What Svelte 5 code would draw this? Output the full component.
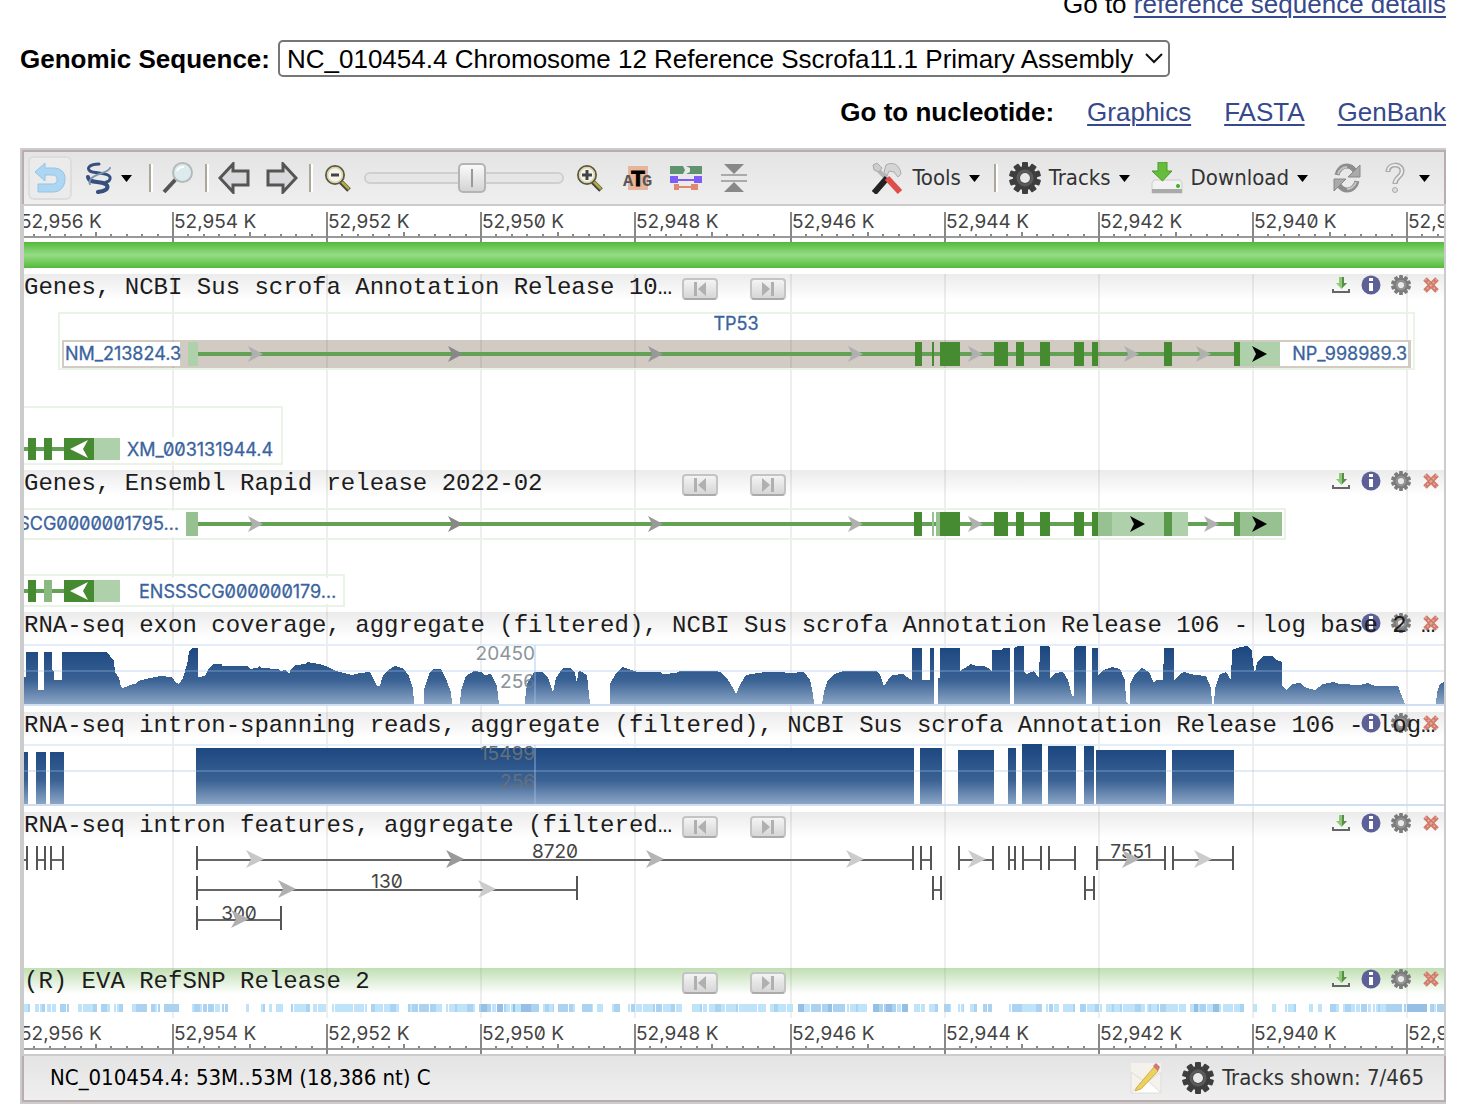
<script>
  const gridX = [173, 327, 481, 635, 791, 945, 1099, 1253, 1407];
  const ruler = [
    { x: 19, label: '52,956 K' },
    { x: 173, label: '52,954 K' },
    { x: 327, label: '52,952 K' },
    { x: 481, label: '52,950 K' },
    { x: 635, label: '52,948 K' },
    { x: 791, label: '52,946 K' },
    { x: 945, label: '52,944 K' },
    { x: 1099, label: '52,942 K' },
    { x: 1253, label: '52,940 K' },
    { x: 1407, label: '52,938 K' }
  ];
  const minor = [1, 2, 3, 4, 5, 6, 7, 8, 9];

  const DARK = '#468a32';
  const MID = '#97c191';
  const LIGHT = '#aed0ab';
  const sharedExons = [
    [994, 1008], [1016, 1024], [1040, 1050], [1074, 1084], [1092, 1098]
  ].map(([a, b]) => [a, b, DARK]);
  const tp53 = [
    [188, 198, LIGHT], [915, 922, DARK], [932, 934, DARK], [940, 960, DARK],
    ...sharedExons,
    [1164, 1172, DARK], [1234, 1240, DARK], [1240, 1280, LIGHT]
  ];
  const ensembl = [
    [186, 198, MID], [914, 922, DARK], [932, 934, MID], [936, 940, MID], [940, 960, DARK],
    ...sharedExons,
    [1098, 1112, MID], [1112, 1164, LIGHT], [1164, 1172, '#58994a'], [1172, 1188, LIGHT],
    [1234, 1240, '#58994a'], [1240, 1282, MID]
  ];
  const geneArrows = [
    [248, '#b0b0b0'], [448, '#888'], [648, '#999'], [848, '#b0b0b0'], [968, '#b0b0b0']
  ];

  const coverage =
    '24,677 26,677 26,652 37,652 38,653 38,690 44,690 44,652 52,652 52,670 54,672 54,680 62,680 62,652 107,652 114,661 115,672 119,678 121,687 123,688 133,684 136,684 138,681 150,678 160,676 172,677 176,683 179,684 183,678 185,671 187,665 189,652 192,648 198,648 198,677 205,676 208,670 213,664 222,664 222,666 248,666 250,669 257,668 259,666 261,668 278,669 280,671 285,670 289,674 291,669 296,665 305,664 307,662 312,663 320,664 328,667 336,671 340,672 352,675 360,673 370,672 374,680 377,686 380,686 383,675 388,670 395,666 404,669 409,676 413,688 414,704 424,704 424,690 429,674 433,669 441,669 446,679 451,692 452,704 460,704 461,690 466,676 474,671 481,672 485,675 491,674 497,686 499,704 525,704 525,700 527,684 534,672 543,672 548,678 553,692 556,678 560,672 563,668 571,668 575,673 577,684 578,672 580,671 587,675 590,704 610,704 610,684 616,673 623,667 628,669 638,672 660,672 663,674 676,673 680,671 716,671 722,673 728,680 733,688 736,694 740,685 746,675 752,674 765,672 780,672 790,673 804,672 810,680 813,694 814,704 822,704 824,692 828,680 834,674 844,671 876,671 880,675 884,686 888,680 892,675 903,674 907,677 912,680 912,648 922,648 922,680 930,680 930,648 934,648 934,704 938,704 938,678 940,678 940,648 960,648 960,671 965,668 971,664 976,666 984,666 988,668 992,672 992,650 1002,650 1003,648 1010,648 1010,704 1014,704 1014,648 1018,646 1024,646 1024,672 1027,674 1034,671 1039,678 1040,646 1048,646 1050,648 1050,678 1055,673 1063,672 1068,680 1072,696 1074,696 1074,648 1077,646 1086,646 1086,704 1092,704 1092,648 1098,648 1098,676 1103,670 1112,667 1120,669 1125,680 1126,702 1128,704 1130,704 1130,684 1135,674 1142,668 1149,672 1154,683 1156,680 1163,680 1164,648 1174,648 1174,680 1180,674 1184,672 1195,675 1206,676 1211,688 1212,704 1214,704 1215,688 1220,674 1226,672 1231,680 1232,650 1240,647 1248,646 1252,651 1253,664 1255,673 1257,662 1264,656 1272,656 1276,660 1282,662 1282,686 1287,690 1292,684 1300,683 1304,687 1315,690 1323,684 1333,682 1340,684 1360,685 1368,683 1375,686 1398,686 1401,694 1405,704 1436,704 1437,692 1440,684 1444,682 1444,704 24,704';

  const spans = [
    [24, 28, 752], [36, 46, 752], [50, 64, 752], [196, 914, 748], [920, 942, 748],
    [958, 994, 750], [1008, 1016, 748], [1022, 1042, 744], [1048, 1076, 746],
    [1084, 1094, 746], [1096, 1166, 750], [1172, 1234, 750]
  ];

  const introns = [
    [16, 27, 860], [37, 45, 860], [51, 63, 860], [197, 913, 860], [921, 931, 860],
    [959, 993, 860], [1009, 1015, 860], [1023, 1041, 860], [1049, 1075, 860],
    [1097, 1165, 860], [1173, 1233, 860], [197, 577, 890], [933, 941, 890],
    [1085, 1094, 890], [197, 281, 920]
  ];
  const intronArrows = [
    [246, 858, '#c8c8c8'], [446, 858, '#999'], [646, 858, '#b5b5b5'], [846, 858, '#ccc'],
    [968, 858, '#ccc'], [1122, 858, '#b5b5b5'], [1194, 858, '#ccc'],
    [278, 888, '#b0b0b0'], [478, 888, '#ccc'], [231, 918, '#b0b0b0']
  ];
  const intronLabels = [
    [555, 858, '8720'], [387, 888, '130'], [239, 920, '300'], [1131, 858, '7551']
  ];

  const snpTones = ['#bfe4fa', '#abd3f1', '#96bfe6'];
  const snpBlocks = [
    [24, 30, 0], [35, 45, 0], [47, 56, 0], [60, 69, 1], [78, 97, 0], [101, 110, 0], [114, 123, 0],
    [132, 147, 0], [151, 160, 0], [164, 179, 1], [192, 220, 1], [222, 228, 0], [246, 249, 0],
    [261, 265, 0], [269, 272, 0], [276, 283, 0], [291, 310, 0], [313, 326, 0], [332, 367, 0],
    [371, 399, 0], [408, 442, 1], [446, 475, 0], [479, 539, 2], [543, 554, 0], [558, 576, 1],
    [582, 593, 0], [597, 603, 0], [612, 620, 0], [628, 682, 0], [692, 707, 0], [709, 766, 1],
    [770, 793, 1], [798, 845, 2], [847, 867, 1], [873, 908, 2], [914, 925, 0], [929, 938, 0],
    [944, 951, 0], [958, 964, 0], [970, 977, 0], [983, 992, 0], [1009, 1042, 0], [1046, 1059, 0],
    [1063, 1076, 0], [1080, 1102, 0], [1106, 1145, 1], [1147, 1186, 2], [1190, 1221, 2],
    [1223, 1244, 0], [1253, 1257, 0], [1272, 1276, 0], [1285, 1296, 0], [1309, 1313, 0],
    [1318, 1322, 0], [1330, 1339, 0], [1343, 1371, 0], [1373, 1402, 1], [1404, 1427, 2],
    [1430, 1444, 1]
  ];
  const snps = [];
  let seed = 7;
  const next = () => (seed = (seed * 73 + 41) % 997) / 997;
  for (const [a, b, tone] of snpBlocks) {
    let x = a;
    while (x < b) {
      const w = Math.min(2 + Math.floor(next() * 3) * 2, b - x);
      const shade = tone === 0 ? (next() > 0.75 ? 1 : 0) : Math.floor(next() * (tone + 1));
      snps.push({ x, w, fill: snpTones[shade] });
      x += w + (next() > 0.65 ? 1 : 0);
    }
  }

  let zoom = $state(55);
</script>

{#snippet caret()}
  <svg class="caret" width="11" height="7" viewBox="0 0 11 7" aria-hidden="true"><path d="M0 0h11L5.500 7z" fill="#000" /></svg>
{/snippet}

{#snippet gear(size, dark, light)}
  <svg width={size} height={size} viewBox="0 0 32 32" aria-hidden="true">
    <g fill={dark}>
      {#each [0, 36, 72, 108, 144] as a}
        <rect x="13" y="0" width="6" height="32" rx="1" transform="rotate({a} 16 16)" />
      {/each}
      <circle cx="16" cy="16" r="12" />
    </g>
    <circle cx="16" cy="16" r="7" fill="none" stroke={light} stroke-width="3" opacity="0.4" />
    <circle cx="16" cy="16" r="5" fill="#e9e9e9" />
  </svg>
{/snippet}

{#snippet loupe(plus)}
  <svg width="32" height="32" viewBox="0 0 32 32" aria-hidden="true">
    <path d="M19 20l8 8" stroke="#444" stroke-width="5" />
    <path d="M19 19l8 8" stroke="#b5ac3c" stroke-width="2.500" />
    <circle cx="13" cy="13" r="9" fill="#f4f4ee" stroke="#5c5940" stroke-width="2" />
    <circle cx="13" cy="13" r="7.500" fill="none" stroke="#d8d4a8" stroke-width="1.500" />
    <path d={plus ? 'M8 13h10M13 8v10' : 'M9 13h8'} stroke="#444" stroke-width="3" />
  </svg>
{/snippet}

{#snippet arrow(x, y, fill, flip)}
  <path d={flip ? `M${x + 18} ${y - 9}L${x} ${y}L${x + 18} ${y + 9}L${x + 13} ${y}z` : `M${x} ${y - 8}L${x + 15} ${y}L${x} ${y + 8}L${x + 4} ${y}z`} {fill} />
{/snippet}

{#snippet rulerBar()}
  <svg class="lane" viewBox="24 206 1420 36" role="img" aria-label="Sequence ruler">
    <rect x="24" y="206" width="1420" height="36" fill="#fff" />
    <rect x="24" y="236" width="1420" height="2" fill="#999" />
    {#each ruler as r}
      <rect x={r.x - 1} y="212" width="2" height="30" fill="#888" />
      {#each minor as m}
        <rect x={r.x + Math.round(m * 15.4) - 1} y={m === 5 ? 232 : 234} width="2" height={m === 5 ? 4 : 2} fill="#888" />
      {/each}
      <text class="tick" x={r.x + 1} y="228">{r.label}</text>
    {/each}
  </svg>
{/snippet}

{#snippet head(title, nav, save, wide, green)}
  <header class="head" class:green>
    <div class="icons">
      {#if save}
        <button aria-label="Download track data">
          <svg width="20" height="20" viewBox="0 0 20 20"><path d="M8 2h5v6h3l-5.500 6L5 8h3z" fill="#8ccb74" /><path d="M11 2h2v6h3l-5 5z" fill="#5b8a4c" /><path d="M2 14v3h16v-3" fill="none" stroke="#666" stroke-width="2" /></svg>
        </button>
      {/if}
      <button aria-label="Track information">
        <svg width="20" height="20" viewBox="0 0 20 20"><circle cx="10" cy="10" r="9.500" fill="#5d6096" /><path d="M8 3h4v3H8zM8 8h4v8H8z" fill="#fff" /></svg>
      </button>
      <button aria-label="Track settings">{@render gear(20, '#7c7c7c', '#bbb')}</button>
      <button aria-label="Hide track">
        <svg width="20" height="20" viewBox="0 0 20 20"><path d="M4 4l12 12M16 4L4 16" stroke="#d07a68" stroke-width="5" /><path d="M4 4l12 12M16 4L4 16" stroke="#e3a49a" stroke-width="2" stroke-dasharray="2 2" /></svg>
      </button>
    </div>
    <h2 class:wide>{title}</h2>
    {#if nav}
      <div class="nav">
        <button aria-label="Previous feature"><svg width="14" height="14" viewBox="0 0 14 14"><path d="M1 0h3v14H1zM13 0v14L5 7z" fill="#b0b0b0" /></svg></button>
        <button aria-label="Next feature"><svg width="14" height="14" viewBox="0 0 14 14"><path d="M10 0h3v14h-3zM1 0v14l8-7z" fill="#b0b0b0" /></svg></button>
      </div>
    {/if}
  </header>
{/snippet}

<main>
  <p class="ref">Go to&nbsp;<a href="#reference">reference sequence details</a></p>

  <div class="sequence">
    <label for="seq">Genomic Sequence:</label>
    <div class="picker">
      <select id="seq">
        <option>NC_010454.4 Chromosome 12 Reference Sscrofa11.1 Primary Assembly</option>
      </select>
      <svg class="chevron" width="18" height="11" viewBox="0 0 18 11" aria-hidden="true"><path d="M1 1l8 8 8-8" fill="none" stroke="#111" stroke-width="2" /></svg>
    </div>
  </div>

  <nav class="links">
    <strong>Go to nucleotide:</strong>
    <a href="#graphics">Graphics</a>
    <a href="#fasta">FASTA</a>
    <a href="#genbank">GenBank</a>
  </nav>

  <section class="viewer">
    <div class="toolbar">
      <button class="tool pressed" aria-label="Undo">
        <svg width="32" height="32" viewBox="0 0 32 32"><path d="M1 10L11 1v5h8c8 0 12 4 12 11s-4 13-12 13H4v-8h14c4 0 5-2 5-4.500S22 13 18 13h-7v6z" fill="#add6f3" stroke="#93c3e8" /></svg>
      </button>
      <button class="tool menu" aria-label="Strand options">
        <svg width="28" height="32" viewBox="0 0 28 32" fill="none" stroke="#35507c" stroke-linecap="round"><path d="M14 2C5 2 1 6 5 9s18 1 20 6c1 3-2 5-4 5" stroke-width="3" /><path d="M3 15c1 6 9 4 15 6s6 6 0 8l-5 1" stroke-width="4" /><path d="M25 6c-2 5-10 4-17 9-3 2-4 5-3 7" stroke="#7e92b0" stroke-width="2" /></svg>
        {@render caret()}
      </button>
      <span class="sep"></span>
      <button class="tool" aria-label="Find">
        <svg width="32" height="32" viewBox="0 0 32 32"><path d="M2 30l12-13" stroke="#555" stroke-width="4" /><circle cx="20.500" cy="10.500" r="9.500" fill="#dcebed" stroke="#b5b9ba" stroke-width="2" /><path d="M15 9c1-3 4-4 7-4" stroke="#fff" stroke-width="2" fill="none" /></svg>
      </button>
      <span class="sep"></span>
      <button class="tool" aria-label="Pan left">
        <svg width="32" height="32" viewBox="0 0 32 32"><path d="M2 16L15 2v7h15v14H15v7z" fill="#dadadc" stroke="#555" stroke-width="3" /></svg>
      </button>
      <button class="tool" aria-label="Pan right">
        <svg width="32" height="32" viewBox="0 0 32 32"><path d="M30 16L17 2v7H2v14h15v7z" fill="#dadadc" stroke="#555" stroke-width="3" /></svg>
      </button>
      <span class="sep"></span>
      <button class="tool" aria-label="Zoom out">{@render loupe(false)}</button>
      <input class="slider" type="range" min="0" max="100" bind:value={zoom} aria-label="Zoom level" />
      <button class="tool" aria-label="Zoom in">{@render loupe(true)}</button>
      <button class="tool" aria-label="Zoom to sequence">
        <svg width="32" height="32" viewBox="0 0 32 32"><rect x="6" y="4" width="20" height="24" fill="#e9b49c" /><text class="base" x="1" y="24">A</text><text class="base" x="20" y="24">G</text><text class="thymine" x="16" y="24">T</text></svg>
      </button>
      <button class="tool" aria-label="Display mode">
        <svg width="32" height="32" viewBox="0 0 32 32"><path d="M0 4h13l2 4-2 4H0zM16 4h16v8H16l4-2V6z" fill="#5f936d" /><path d="M0 14h8v3h16v-3h8v7h-8v-2H8v2H0z" fill="#7d5df5" /><path d="M4 22h5v2h12v-2h7v6h-7v-2H9v2H4z" fill="#df8a70" /></svg>
      </button>
      <button class="tool" aria-label="Collapse">
        <svg width="32" height="32" viewBox="0 0 32 32"><path d="M6 2h20l-10 10z" fill="#888" /><path d="M6 30h20l-10-10z" fill="#888" /><path d="M3 13h26M3 19h26" stroke="#aaa" stroke-width="2" /></svg>
      </button>

      <span class="spring"></span>

      <button class="item">
        <svg width="32" height="32" viewBox="0 0 32 32"><path d="M5 7l12 12" stroke="#b5b5b5" stroke-width="4" /><path d="M1 3l4-2 5 5-3 4-5-2z" fill="#ccc" stroke="#aaa" /><path d="M14 3c7-4 14 0 15 9l-3 3-4-5-5-1-2 5-3-4z" fill="#d5d5d5" stroke="#aaa" /><path d="M15 16L2 31" stroke="#222" stroke-width="6" /><path d="M15 16l13 14" stroke="#df4f4a" stroke-width="6" /></svg>
        Tools {@render caret()}
      </button>
      <span class="sep"></span>
      <button class="item">{@render gear(32, '#3e3e3e', '#888')} Tracks {@render caret()}</button>
      <button class="item">
        <svg width="32" height="32" viewBox="0 0 32 32"><path d="M1 21l2-3h26l2 3v10H1V21z" fill="#f2f2f2" stroke="#ccc" /><path d="M1 27h30v4H1z" fill="#aaa" /><circle cx="27" cy="24" r="2" fill="#3fae2a" /><path d="M7 0h9v9h5l-9.500 10L1 9h6z" fill="#66bd3c" stroke="#4a9a28" /></svg>
        Download {@render caret()}
      </button>
      <button class="tool refresh" aria-label="Refresh">
        <svg width="32" height="32" viewBox="0 0 32 32" fill="none" stroke="#8d8d8d" stroke-width="5"><path d="M6 13c1-5 5-9 10-9 4 0 6 2 8 5M26 19c-1 5-5 9-10 9-4 0-6-2-8-5" /><path d="M29 3v12H17zM3 29V17h12z" fill="#aaa" stroke="#888" stroke-width="1" /><path d="M7 12c1-4 5-7 9-7M25 20c-1 4-5 7-9 7" stroke="#c5c5c5" stroke-width="2" /></svg>
      </button>
      <button class="item help" aria-label="Help">
        <svg width="20" height="32" viewBox="0 0 20 32" fill="none"><path d="M3 10c0-9 14-9 14-1 0 6-7 6-7 13" stroke="#aaa" stroke-width="5" /><path d="M3 9c0-8 14-8 14 0 0 6-7 6-7 12" stroke="#eee" stroke-width="2" /><circle cx="10" cy="28" r="2.500" fill="#ddd" stroke="#aaa" /></svg>
        {@render caret()}
      </button>
    </div>

    <div class="tracks">
      {@render rulerBar()}
      <div class="sequence-bar"></div>

      <div class="canvas">
        <svg class="grid" viewBox="24 0 1420 100" preserveAspectRatio="none" aria-hidden="true">
          {#each gridX as x}<rect x={x - 1} y="0" width="2" height="100" fill="#eee" />{/each}
        </svg>

        <article>
          {@render head('Genes, NCBI Sus scrofa Annotation Release 10…', true, true, false, false)}
          <svg class="lane" viewBox="24 300 1420 170" role="img" aria-label="TP53 gene models">
            <rect class="outline" x="59" y="313" width="1355" height="56" />
            <rect x="62" y="340" width="1349" height="28" fill="#d1cbc4" />
            {#each gridX.slice(0, 8) as x}<rect x={x - 1} y="340" width="2" height="28" fill="#c4beb8" />{/each}
            <rect x="64" y="342" width="116" height="24" fill="#fff" />
            <rect x="1280" y="342" width="128" height="24" fill="#fff" />
            <rect x="198" y="352" width="1036" height="4" fill="#63a155" />
            {#each tp53 as [a, b, fill]}<rect x={a} y="342" width={b - a} height="24" {fill} />{/each}
            {#each geneArrows as [x, fill]}{@render arrow(x, 354, fill)}{/each}
            {@render arrow(1124, 354, '#b0b0b0')}
            {@render arrow(1196, 354, '#b0b0b0')}
            {@render arrow(1252, 354, '#000')}
            <text class="name" x="736" y="330" text-anchor="middle">TP53</text>
            <text class="name" x="181" y="360" text-anchor="end">NM_213824.3</text>
            <text class="name" x="1407" y="360" text-anchor="end">NP_998989.3</text>

            <rect class="outline" x="20" y="407" width="262" height="57" />
            <rect x="122" y="437" width="156" height="24" fill="#fff" />
            <rect x="24" y="447" width="40" height="4" fill="#63a155" />
            <rect x="28" y="438" width="8" height="22" fill={DARK} />
            <rect x="44" y="438" width="8" height="22" fill={DARK} />
            <rect x="64" y="438" width="30" height="22" fill={DARK} />
            <rect x="94" y="438" width="26" height="22" fill={LIGHT} />
            {@render arrow(70, 449, '#fff', true)}
            <text class="name" x="127" y="456">XM_003131944.4</text>
          </svg>
        </article>

        <article>
          {@render head('Genes, Ensembl Rapid release 2022-02', true, true, false, false)}
          <svg class="lane" viewBox="24 496 1420 116" role="img" aria-label="Ensembl gene models">
            <rect class="outline" x="20" y="509" width="1265" height="30" />
            <rect x="24" y="511" width="158" height="26" fill="#fff" />
            <rect x="198" y="522" width="1036" height="4" fill="#63a155" />
            {#each ensembl as [a, b, fill]}<rect x={a} y="512" width={b - a} height="24" {fill} />{/each}
            {#each geneArrows as [x, fill]}{@render arrow(x, 524, fill)}{/each}
            {@render arrow(1130, 524, '#000')}
            {@render arrow(1204, 524, '#b0b0b0')}
            {@render arrow(1252, 524, '#000')}
            <text class="name" x="179" y="530" text-anchor="end">ENSSSCG0000001795…</text>

            <rect class="outline" x="20" y="575" width="324" height="31" />
            <rect x="134" y="578" width="208" height="26" fill="#fff" />
            <rect x="24" y="589" width="40" height="4" fill="#63a155" />
            <rect x="28" y="580" width="8" height="22" fill={DARK} />
            <rect x="44" y="580" width="8" height="22" fill="#8ab982" />
            <rect x="64" y="580" width="30" height="22" fill={DARK} />
            <rect x="94" y="580" width="26" height="22" fill={LIGHT} />
            {@render arrow(70, 591, '#fff', true)}
            <text class="name" x="139" y="598">ENSSSCG000000179…</text>
          </svg>
        </article>

        <article>
          {@render head('RNA-seq exon coverage, aggregate (filtered), NCBI Sus scrofa Annotation Release 106 - log base 2 …', false, false, true, false)}
          <svg class="lane" viewBox="24 638 1420 74" role="img" aria-label="Exon coverage histogram">
            <defs>
              <linearGradient id="cover" gradientUnits="userSpaceOnUse" x1="0" y1="645" x2="0" y2="704">
                <stop offset="0" stop-color="#1a457e" /><stop offset="0.600" stop-color="#3a6294" /><stop offset="1" stop-color="#8ba5c5" />
              </linearGradient>
            </defs>
            <text class="scale" x="535" y="660" text-anchor="end">20450</text>
            <text class="scale" x="535" y="688" text-anchor="end">256</text>
            <rect x="24" y="644" width="1420" height="2" fill="#e4eef8" />
            <polygon points={coverage} fill="url(#cover)" shape-rendering="crispEdges" />
            <rect x="24" y="670" width="1420" height="2" fill="#9fc0ea" opacity="0.300" />
            <rect x="534" y="645" width="2" height="60" fill="#9fc0ea" opacity="0.400" />
            <text class="scale faint" x="535" y="688" text-anchor="end">256</text>
            <rect x="24" y="704" width="1420" height="2" fill="#cfdff1" />
          </svg>
        </article>

        <article>
          {@render head('RNA-seq intron-spanning reads, aggregate (filtered), NCBI Sus scrofa Annotation Release 106 - log…', false, false, true, false)}
          <svg class="lane" viewBox="24 738 1420 74" role="img" aria-label="Intron-spanning reads histogram">
            <defs>
              <linearGradient id="reads" gradientUnits="userSpaceOnUse" x1="0" y1="745" x2="0" y2="804">
                <stop offset="0" stop-color="#1a457e" /><stop offset="0.600" stop-color="#3a6294" /><stop offset="1" stop-color="#8ba5c5" />
              </linearGradient>
            </defs>
            <rect x="24" y="744" width="1420" height="2" fill="#e4eef8" />
            {#each spans as [a, b, top]}<rect x={a} y={top} width={b - a} height={804 - top} fill="url(#reads)" />{/each}
            <rect x="24" y="770" width="1420" height="2" fill="#9fc0ea" opacity="0.300" />
            <rect x="534" y="745" width="2" height="60" fill="#9fc0ea" opacity="0.400" />
            <rect x="24" y="804" width="1420" height="2" fill="#cfdff1" />
            <text class="scale dim" x="535" y="760" text-anchor="end">15499</text>
            <text class="scale dim" x="535" y="788" text-anchor="end">256</text>
          </svg>
        </article>

        <article>
          {@render head('RNA-seq intron features, aggregate (filtered…', true, true, false, false)}
          <svg class="lane" viewBox="24 838 1420 130" role="img" aria-label="Intron features">
            {#each introns as [a, b, y]}
              <rect x={a} y={y - 1} width={b - a} height="2" fill="#666" />
              <rect x={a - 1} y={y - 14} width="2" height="24" fill="#555" />
              <rect x={b - 1} y={y - 14} width="2" height="24" fill="#555" />
            {/each}
            {#each intronLabels as [x, y, label]}<text class="count" {x} {y} text-anchor="middle">{label}</text>{/each}
            {#each intronArrows as [x, y, fill]}
              <path d="M{x} {y - 8}L{x + 18} {y + 1}L{x} {y + 10}L{x + 5} {y + 1}z" {fill} />
            {/each}
          </svg>
        </article>

        <article>
          {@render head('(R) EVA RefSNP Release 2', true, true, false, true)}
          <svg class="lane" viewBox="24 994 1420 24" role="img" aria-label="SNP density">
            {#each snps as s}<rect x={s.x} y="1004" width={s.w} height="8" fill={s.fill} />{/each}
          </svg>
        </article>
      </div>
      {@render rulerBar()}
    </div>

    <footer class="status">
      <span class="range">NC_010454.4: 53M..53M (18,386 nt) C</span>
      <button class="note" aria-label="Feedback">
        <svg width="32" height="32" viewBox="0 0 32 32"><rect x="1" y="1" width="30" height="30" fill="#f4f2ea" /><path d="M1 31l15-14 15 14z" fill="#fff" stroke="#ddd" /><path d="M1 31V10l14 10M31 31V10L17 20" fill="none" stroke="#ddd" /><path d="M7 25L24 5l4 4L11 27l-6 2z" fill="#edd05e" stroke="#cdae50" /><path d="M23 4l3-3 4 4-2 4z" fill="#cf7a76" /></svg>
      </button>
      <button class="shown">{@render gear(32, '#3e3e3e', '#888')} Tracks shown: 7/465</button>
    </footer>
  </section>
</main>

<style>
  :global(body) { background: #fff; }
  main {
    padding: 0 16px 10px 20px;
    font: 26px/30px 'Liberation Sans', Arial, sans-serif;
    color: #000;
  }
  a { color: #36498c; text-decoration: underline; text-decoration-thickness: 2px; text-underline-offset: 3px; }
  button { border: 0; padding: 0; background: none; font: inherit; color: inherit; cursor: pointer; }
  svg { flex: none; }
  .ref { display: flex; justify-content: flex-end; align-items: flex-end; height: 19px; margin: 0; }
  .sequence { display: flex; align-items: center; gap: 8px; margin-top: 21px; }
  .sequence label { font-weight: bold; white-space: nowrap; }
  .picker { display: grid; align-items: center; }
  .picker > * { grid-area: 1 / 1; }
  select {
    appearance: none; height: 37px; padding: 0 33px 0 7px; font: inherit; color: #000;
    background: #fff; border: 2px solid #767676; border-radius: 5px;
  }
  .chevron { justify-self: end; margin-right: 7px; pointer-events: none; }
  .links { display: flex; justify-content: flex-end; gap: 33px; margin: 20px 0 21px; }

  .viewer {
    border: solid #ccc; border-width: 2px 0 2px 2px;
    font: 22px/28px 'DejaVu Sans Condensed', Tahoma, sans-serif;
  }
  .toolbar {
    display: flex; align-items: center; height: 52px; padding-right: 3px;
    border: solid #bbadad; border-width: 2px 2px 0;
    background: linear-gradient(#e4e4e4, #efefef); color: #333;
  }
  .tool { display: flex; align-items: center; justify-content: center; gap: 8px; width: 48px; height: 44px; flex: none; }
  .pressed { width: 44px; margin: 0 2px 0 4px; border: 2px solid #ddd; border-radius: 6px; background: #ebebeb; box-sizing: border-box; }
  .menu { width: 72px; padding-right: 4px; }
  .refresh { width: 56px; }
  .sep { width: 2px; height: 28px; margin: 0 3px; background: #aca899; box-shadow: 2px 0 #fff; flex: none; }
  .spring { flex: 1; }
  .item { display: flex; align-items: center; gap: 8px; padding: 0 11px 0 10px; white-space: nowrap; }
  .help { gap: 14px; }
  .slider { appearance: none; width: 200px; height: 30px; margin: 0 2px; background: none; }
  .slider::-webkit-slider-runnable-track {
    height: 12px; border: 2px solid #ccd0d0; border-radius: 6px; background: #e6e6e6; box-sizing: border-box;
  }
  .slider::-webkit-slider-thumb {
    appearance: none; width: 28px; height: 30px; margin-top: -11px; box-sizing: border-box;
    border: 2px solid #b4b4b4; border-radius: 5px;
    background: linear-gradient(#999, #999) center / 2px 18px no-repeat, linear-gradient(#fafafa, #d4d4d4);
  }
  .base { font: bold 17px 'Liberation Mono', monospace; fill: #555; }
  .thymine { font: bold 22px 'Liberation Sans', sans-serif; text-anchor: middle; fill: #000; stroke: #000; stroke-width: 1px; }

  .tracks { border: solid #ccc; border-width: 2px 2px 2px; background: #fff; }
  .sequence-bar {
    height: 26px; margin-bottom: 6px;
    background: linear-gradient(#54ba3a, #95dc86 50%, #54ba3a);
  }
  .canvas { position: relative; }
  .grid { position: absolute; inset: 0; width: 100%; height: 100%; }
  article { position: relative; }
  .lane { display: block; width: 100%; height: auto; overflow: hidden; }
  .head {
    position: relative; display: flex; align-items: center; height: 26px;
    background: linear-gradient(rgba(0, 0, 0, 0.08), rgba(0, 0, 0, 0));
  }
  .head.green { background: linear-gradient(rgba(106, 178, 75, 0.42), rgba(106, 178, 75, 0)); }
  h2 {
    position: relative; width: 658px; margin: 0; white-space: pre; flex: none;
    font: 24px/26px 'Liberation Mono', 'Courier New', monospace; padding-top: 2px; color: #1c1c1c;
  }
  h2.wide { width: auto; }
  .nav { display: flex; gap: 32px; padding-top: 4px; }
  .nav button {
    display: flex; align-items: center; justify-content: center; width: 36px; height: 22px;
    border: 2px solid #c4c4c4; border-bottom-color: #aaa; border-radius: 4px; box-sizing: border-box;
    background: linear-gradient(#f4f4f4, #d6d6d6);
  }
  .icons { position: absolute; right: 3px; top: 1px; display: flex; gap: 10px; }
  .icons button { display: flex; }
  .outline { fill: none; stroke: #e9f4e6; stroke-width: 2px; }
  text { font: 18px Inter, 'DejaVu Sans', sans-serif; font-feature-settings: 'zero' 1; }
  .name { fill: #3a639d; stroke: #3a639d; stroke-width: 0.3px; }
  .tick { fill: #444; font-size: 19px; }
  .count { fill: #444; font-size: 19px; }
  .scale { fill: #8b9499; font-size: 19px; font-feature-settings: normal; }
  .faint { opacity: 0.3; }
  .dim { fill: #66707a; }

  .status {
    display: flex; align-items: center; height: 44px; padding: 0 20px 0 26px;
    border: solid #bbadad; border-width: 0 2px 2px;
    background: linear-gradient(#e4e4e4, #efefef);
  }
  .range { flex: 1; }
  .note { display: flex; margin-right: 20px; }
  .shown { display: flex; align-items: center; gap: 8px; color: #333; }
</style>
